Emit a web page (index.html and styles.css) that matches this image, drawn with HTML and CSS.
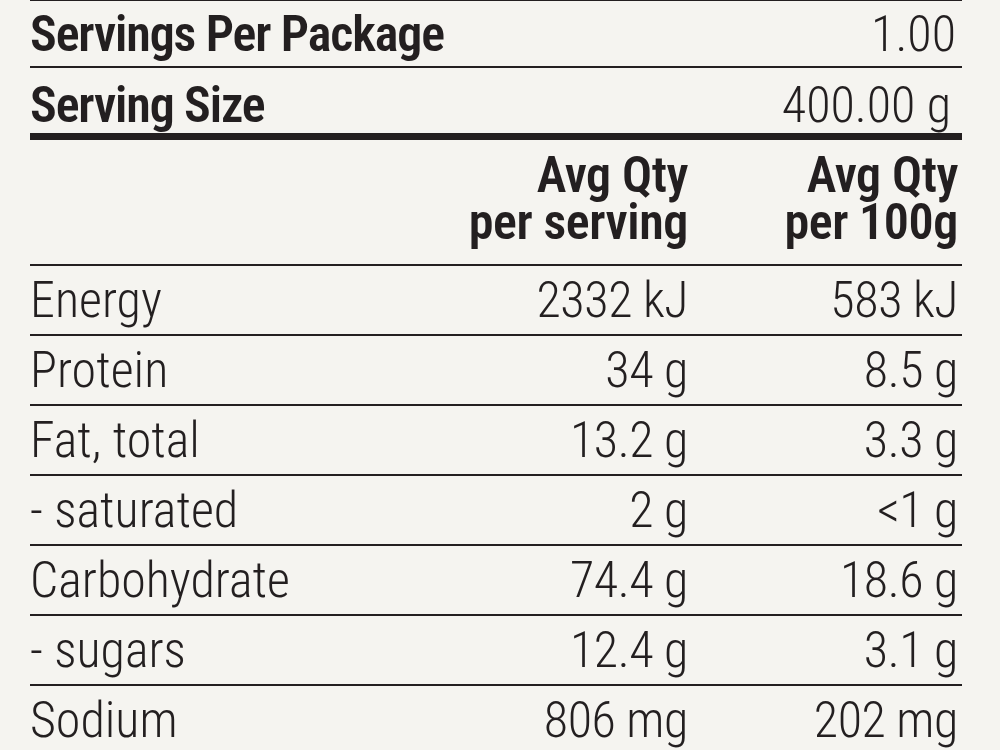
FILE: index.html
```html
<!DOCTYPE html>
<html lang="en">
<head>
<meta charset="utf-8">
<title>Nutrition Information</title>
<link rel="stylesheet" href="styles.css">
</head>
<body>
<div class="panel">
  <div class="summary summary-first">
    <span class="summary-label">Servings Per Package</span>
    <span class="summary-value">1.00</span>
  </div>
  <div class="summary summary-second">
    <span class="summary-label">Serving Size</span>
    <span class="summary-value value-size">400.00 g</span>
  </div>
  <div class="row head">
    <span></span>
    <span class="num"><span class="hl">Avg Qty</span><span class="hl">per serving</span></span>
    <span class="num"><span class="hl">Avg Qty</span><span class="hl">per 100g</span></span>
  </div>
  <div class="row"><span>Energy</span><span class="num">2332 kJ</span><span class="num">583 kJ</span></div>
  <div class="row"><span>Protein</span><span class="num">34 g</span><span class="num">8.5 g</span></div>
  <div class="row"><span>Fat, total</span><span class="num">13.2 g</span><span class="num">3.3 g</span></div>
  <div class="row"><span>- saturated</span><span class="num">2 g</span><span class="num">&lt;1 g</span></div>
  <div class="row"><span>Carbohydrate</span><span class="num">74.4 g</span><span class="num">18.6 g</span></div>
  <div class="row"><span>- sugars</span><span class="num">12.4 g</span><span class="num">3.1 g</span></div>
  <div class="row last"><span>Sodium</span><span class="num">806 mg</span><span class="num">202 mg</span></div>
</div>
</body>
</html>
```
FILE: styles.css
```css
html, body {
  margin: 0;
  padding: 0;
  background: #f5f4f0;
}
body {
  color: #231f20;
  font-family: "Roboto Condensed", "Liberation Sans", sans-serif;
  font-size: 50px;
  font-weight: 300;
}
.panel {
  width: 932px;
  margin-left: 30px;
  border-top: 1px solid #231f20;
}
.summary {
  display: flex;
  justify-content: space-between;
  align-items: baseline;
  padding-right: 6px;
  white-space: nowrap;
}
.summary-label {
  font-weight: 600;
  letter-spacing: -1.1px;
}
.summary-first {
  padding-top: 2px;
  line-height: 63px;
  border-bottom: 2px solid #231f20;
}
.summary-second {
  padding-top: 9px;
  line-height: 56px;
  border-bottom: 7px solid #231f20;
}
.value-size {
  padding-right: 5px;
}
.row {
  display: grid;
  grid-template-columns: 1fr 270px 270px;
  padding-right: 4px;
  line-height: 68px;
  border-bottom: 2px solid #231f20;
  white-space: nowrap;
}
.row.last {
  border-bottom: none;
}
.num {
  text-align: right;
  letter-spacing: -0.4px;
}
.head {
  font-weight: 600;
  line-height: 47px;
  padding-top: 12px;
  padding-bottom: 18px;
}
.head .num {
  display: flex;
  flex-direction: column;
  align-items: flex-end;
  letter-spacing: -0.4px;
}
.hl {
  display: block;
  height: 47px;
}
```
